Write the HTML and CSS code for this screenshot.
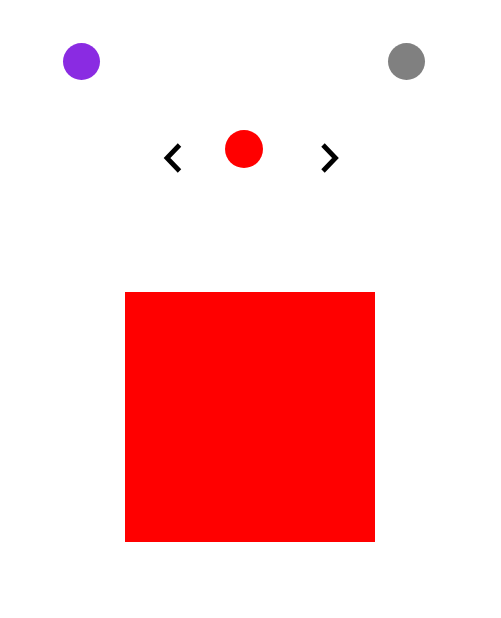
FILE: index.html
```html
<!DOCTYPE html>
<html>
<head>
<meta charset="utf-8">
<link rel="stylesheet" href="styles.css">
</head>
<body>
<div class="page">
  <div class="top-row">
    <div class="dot dot-purple"></div>
    <div class="dot dot-gray"></div>
  </div>
  <div class="nav-row">
    <svg class="chev chev-left" width="20" height="32" viewBox="0 0 20 32">
      <polyline points="16.5,2 4,15 16.5,28" fill="none" stroke="#000" stroke-width="4.8" stroke-linejoin="miter"/>
    </svg>
    <div class="dot dot-red"></div>
    <svg class="chev chev-right" width="20" height="32" viewBox="0 0 20 32">
      <polyline points="3,2 15.5,15 3,28" fill="none" stroke="#000" stroke-width="4.8" stroke-linejoin="miter"/>
    </svg>
  </div>
  <div class="stage">
    <div class="square"></div>
  </div>
</div>
</body>
</html>
```
FILE: styles.css
```css
html, body {
  margin: 0;
  padding: 0;
  background: #ffffff;
  font-family: "DejaVu Sans", sans-serif;
}
.page {
  width: 501px;
  height: 618px;
  overflow: hidden;
}
.top-row {
  display: flex;
  justify-content: space-between;
  padding: 43px 76px 0 63px;
}
.dot {
  width: 37px;
  height: 37px;
  border-radius: 50%;
}
.dot-purple { background: #8a2be2; }
.dot-gray { background: #808080; }
.dot-red {
  width: 38px;
  height: 38px;
  background: #ff0000;
  margin: 0 57px 0 42px;
}
.nav-row {
  display: flex;
  align-items: flex-start;
  margin-top: 50px;
  padding-left: 163px;
}
.chev {
  display: block;
  margin-top: 13px;
}
.stage {
  margin-top: 117px;
  padding-left: 125px;
}
.square {
  width: 250px;
  height: 250px;
  background: #ff0000;
}
```
